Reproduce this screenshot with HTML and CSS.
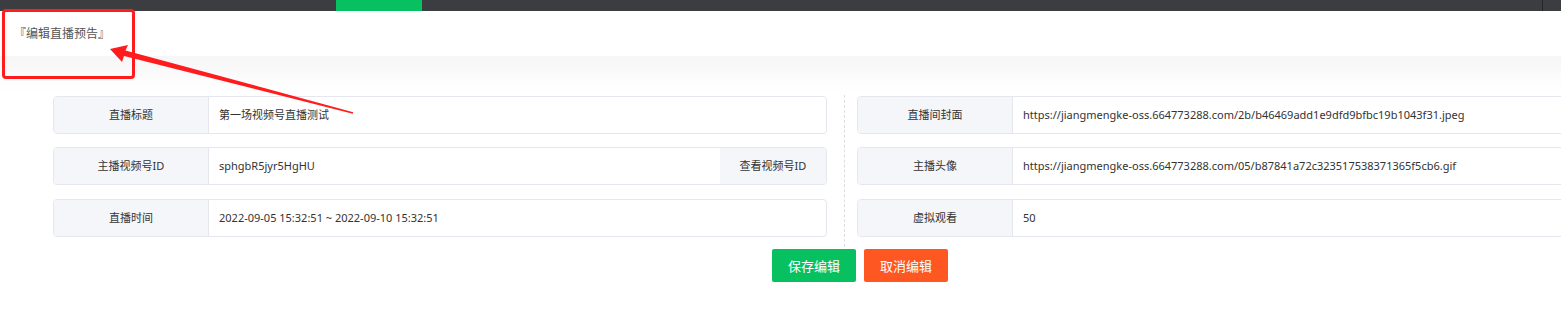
FILE: index.html
```html
<!DOCTYPE html>
<html lang="zh-CN">
	<head>
		<meta charset="UTF-8" />
		<meta name="viewport" content="width=device-width, initial-scale=1.0" />
		<title>编辑直播预告</title>
		<link rel="stylesheet" href="styles.css">
	</head>
	<body>
		<div class="topbar">
			<span class="topbar-tab"></span>
			<span class="topbar-line"></span>
		</div>
		<div class="header">『编辑直播预告』</div>

		<div class="main">
			<div class="columns">
				<div class="col">
					<div class="field">
						<div class="field-label">直播标题</div>
						<div class="field-value">第一场视频号直播测试</div>
					</div>
					<div class="field">
						<div class="field-label">主播视频号ID</div>
						<div class="field-value">sphgbR5jyr5HgHU</div>
						<div class="field-addon">查看视频号ID</div>
					</div>
					<div class="field">
						<div class="field-label">直播时间</div>
						<div class="field-value">2022-09-05 15:32:51 ~ 2022-09-10 15:32:51</div>
					</div>
				</div>
				<div class="divider"></div>
				<div class="col">
					<div class="field">
						<div class="field-label">直播间封面</div>
						<div class="field-value">https://jiangmengke-oss.664773288.com/2b/b46469add1e9dfd9bfbc19b1043f31.jpeg</div>
					</div>
					<div class="field">
						<div class="field-label">主播头像</div>
						<div class="field-value">https://jiangmengke-oss.664773288.com/05/b87841a72c323517538371365f5cb6.gif</div>
					</div>
					<div class="field">
						<div class="field-label">虚拟观看</div>
						<div class="field-value">50</div>
					</div>
				</div>
			</div>
			<div class="actions">
				<button class="btn btn-save" type="button">保存编辑</button>
				<button class="btn btn-cancel" type="button">取消编辑</button>
			</div>
		</div>

		<!-- annotation drawn on top of the screenshot -->
		<div class="mark-box"></div>
		<svg class="mark-arrow" width="400" height="130" viewBox="0 0 400 130">
			<polygon points="110,49 128,45 125.5,50.5 353.2,112.2 352.8,113.8 124,56 122,62" fill="#ff1c1c" />
		</svg>
	</body>
</html>
```

FILE: styles.css
```css
html, body {
	margin: 0;
	overflow: hidden;
}
body {
	width: 1561px;
	background: #fff;
	font-family: "Noto Sans", "Noto Sans CJK SC", sans-serif;
	font-size: 11px;
	color: #333;
	position: relative;
}

.topbar {
	height: 11px;
	background: #3c3d40;
	display: flex;
}
.topbar-tab {
	margin-left: 336px;
	width: 86px;
	background: #07c160;
}
.topbar-line {
	margin-left: 1120px;
	width: 1px;
	background: #242528;
}

.header {
	height: 45px;
	line-height: 45px;
	padding-left: 14px;
	font-size: 12px;
	color: #555;
}

.main {
	background: linear-gradient(#f6f6f6 0, #fff 36px);
	padding-top: 39px;
	height: 216px;
}

.columns {
	display: flex;
	margin-left: 53px;
}
.col {
	width: 774px;
	flex-shrink: 0;
	padding-top: 1px;
	padding-bottom: 10px;
}
.divider {
	width: 0;
	border-left: 1px dashed #dcdde2;
	margin: 0 12px 0 17px;
}

.field {
	display: flex;
	height: 36px;
	border: 1px solid #e6e7ee;
	border-radius: 4px;
	overflow: hidden;
	margin-bottom: 13px;
}
.field:nth-child(2) {
	margin-bottom: 14px;
}
.field:last-child {
	margin-bottom: 0;
}
.field-label {
	width: 154px;
	flex-shrink: 0;
	background: #f5f6fa;
	border-right: 1px solid #e6e7ee;
	text-align: center;
	line-height: 36px;
	color: #333;
}
.field-value {
	flex: 1;
	padding-left: 10px;
	line-height: 36px;
	white-space: nowrap;
}
.field-addon {
	width: 106px;
	background: #f5f6fa;
	text-align: center;
	line-height: 36px;
}

.actions {
	display: flex;
	gap: 8px;
	margin-left: 772px;
	margin-top: 2px;
}
.btn {
	width: 84px;
	height: 33px;
	border: none;
	border-radius: 2px;
	color: #fff;
	font-family: "Noto Sans", "Noto Sans CJK SC", sans-serif;
	font-size: 13px;
	padding: 0;
	cursor: pointer;
}
.btn-save {
	background: #07c160;
}
.btn-cancel {
	background: #ff5722;
}

.mark-box {
	position: absolute;
	left: 2px;
	top: 9px;
	width: 127px;
	height: 64px;
	border: 3px solid #ff1c1c;
	border-radius: 4px;
}
.mark-arrow {
	position: absolute;
	left: 0;
	top: 0;
}
```
